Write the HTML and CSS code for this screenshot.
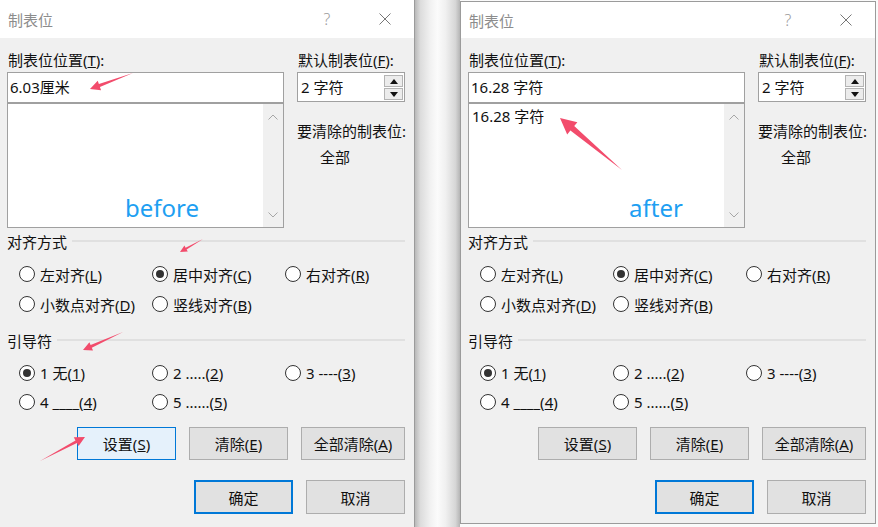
FILE: index.html
```html
<!DOCTYPE html>
<html lang="zh-CN">
<head>
    <meta charset="UTF-8">
    <title>制表位</title>
    <link rel="stylesheet" href="styles.css">
</head>
<body>
    <div class="page">
        <!-- 设置之前 -->
        <section class="dialog dialog-before">
            <div class="titlebar">
                <span class="title">制表位</span>
                <span class="tb-btn help">?</span>
                <span class="tb-btn">
                    <svg width="12" height="12" viewBox="0 0 12 12"><path d="M0.5 0.5 L11.5 11.5 M11.5 0.5 L0.5 11.5" stroke="#777" stroke-width="1" fill="none"/></svg>
                </span>
            </div>
            <div class="dlg-body">
                <div class="top">
                    <div class="col-pos">
                        <div class="field-label">制表位位置(<u>T</u>):</div>
                        <div class="textbox">6.03厘米</div>
                        <div class="listbox">
                            <div class="items"></div>
                            <div class="scroll">
                                <svg width="10" height="6" viewBox="0 0 10 6"><path d="M0.5 5.5 L5 1 L9.5 5.5" stroke="#a6a6a6" fill="none"/></svg>
                                <svg width="10" height="6" viewBox="0 0 10 6"><path d="M0.5 0.5 L5 5 L9.5 0.5" stroke="#a6a6a6" fill="none"/></svg>
                            </div>
                            <span class="note note-before">before</span>
                        </div>
                    </div>
                    <div class="col-def">
                        <div class="field-label">默认制表位(<u>F</u>):</div>
                        <div class="spin">
                            <span class="spin-value">2 字符</span>
                            <div class="spin-btns">
                                <span><svg width="8" height="5" viewBox="0 0 8 5"><path d="M0 5 L4 0 L8 5 Z" fill="#111"/></svg></span>
                                <span><svg width="8" height="5" viewBox="0 0 8 5"><path d="M0 0 L8 0 L4 5 Z" fill="#111"/></svg></span>
                            </div>
                        </div>
                        <div class="clear-label">要清除的制表位:</div>
                        <div class="clear-value">全部</div>
                    </div>
                </div>

                <div class="group-head">对齐方式</div>
                <div class="radios">
                    <div class="radio"><span class="dot"></span><span>左对齐(<u>L</u>)</span></div>
                    <div class="radio"><span class="dot on"></span><span>居中对齐(<u>C</u>)</span></div>
                    <div class="radio"><span class="dot"></span><span>右对齐(<u>R</u>)</span></div>
                    <div class="radio"><span class="dot"></span><span>小数点对齐(<u>D</u>)</span></div>
                    <div class="radio"><span class="dot"></span><span>竖线对齐(<u>B</u>)</span></div>
                </div>

                <div class="group-head group-gap">引导符</div>
                <div class="radios leaders">
                    <div class="radio"><span class="dot on"></span><span>1 无(<u>1</u>)</span></div>
                    <div class="radio"><span class="dot"></span><span>2 .....(<u>2</u>)</span></div>
                    <div class="radio"><span class="dot"></span><span>3 ----(<u>3</u>)</span></div>
                    <div class="radio"><span class="dot"></span><span>4 ____(<u>4</u>)</span></div>
                    <div class="radio"><span class="dot"></span><span>5 ......(<u>5</u>)</span></div>
                </div>

                <div class="btn-row">
                    <div class="btn hot">设置(<u>S</u>)</div>
                    <div class="btn">清除(<u>E</u>)</div>
                    <div class="btn wide">全部清除(<u>A</u>)</div>
                </div>
                <div class="btn-row ok-row">
                    <div class="btn default">确定</div>
                    <div class="btn">取消</div>
                </div>
            </div>
        </section>

        <div class="fold"></div>

        <!-- 设置之后 -->
        <section class="dialog dialog-after">
            <div class="titlebar">
                <span class="title">制表位</span>
                <span class="tb-btn help">?</span>
                <span class="tb-btn">
                    <svg width="12" height="12" viewBox="0 0 12 12"><path d="M0.5 0.5 L11.5 11.5 M11.5 0.5 L0.5 11.5" stroke="#777" stroke-width="1" fill="none"/></svg>
                </span>
            </div>
            <div class="dlg-body">
                <div class="top">
                    <div class="col-pos">
                        <div class="field-label">制表位位置(<u>T</u>):</div>
                        <div class="textbox">16.28 字符</div>
                        <div class="listbox">
                            <div class="items"><div class="item">16.28 字符</div></div>
                            <div class="scroll">
                                <svg width="10" height="6" viewBox="0 0 10 6"><path d="M0.5 5.5 L5 1 L9.5 5.5" stroke="#a6a6a6" fill="none"/></svg>
                                <svg width="10" height="6" viewBox="0 0 10 6"><path d="M0.5 0.5 L5 5 L9.5 0.5" stroke="#a6a6a6" fill="none"/></svg>
                            </div>
                            <span class="note note-after">after</span>
                        </div>
                    </div>
                    <div class="col-def">
                        <div class="field-label">默认制表位(<u>F</u>):</div>
                        <div class="spin">
                            <span class="spin-value">2 字符</span>
                            <div class="spin-btns">
                                <span><svg width="8" height="5" viewBox="0 0 8 5"><path d="M0 5 L4 0 L8 5 Z" fill="#111"/></svg></span>
                                <span><svg width="8" height="5" viewBox="0 0 8 5"><path d="M0 0 L8 0 L4 5 Z" fill="#111"/></svg></span>
                            </div>
                        </div>
                        <div class="clear-label">要清除的制表位:</div>
                        <div class="clear-value">全部</div>
                    </div>
                </div>

                <div class="group-head">对齐方式</div>
                <div class="radios">
                    <div class="radio"><span class="dot"></span><span>左对齐(<u>L</u>)</span></div>
                    <div class="radio"><span class="dot on"></span><span>居中对齐(<u>C</u>)</span></div>
                    <div class="radio"><span class="dot"></span><span>右对齐(<u>R</u>)</span></div>
                    <div class="radio"><span class="dot"></span><span>小数点对齐(<u>D</u>)</span></div>
                    <div class="radio"><span class="dot"></span><span>竖线对齐(<u>B</u>)</span></div>
                </div>

                <div class="group-head group-gap">引导符</div>
                <div class="radios leaders">
                    <div class="radio"><span class="dot on"></span><span>1 无(<u>1</u>)</span></div>
                    <div class="radio"><span class="dot"></span><span>2 .....(<u>2</u>)</span></div>
                    <div class="radio"><span class="dot"></span><span>3 ----(<u>3</u>)</span></div>
                    <div class="radio"><span class="dot"></span><span>4 ____(<u>4</u>)</span></div>
                    <div class="radio"><span class="dot"></span><span>5 ......(<u>5</u>)</span></div>
                </div>

                <div class="btn-row">
                    <div class="btn">设置(<u>S</u>)</div>
                    <div class="btn">清除(<u>E</u>)</div>
                    <div class="btn wide">全部清除(<u>A</u>)</div>
                </div>
                <div class="btn-row ok-row">
                    <div class="btn default">确定</div>
                    <div class="btn">取消</div>
                </div>
            </div>
        </section>

        <!-- 红色标注箭头 -->
        <svg class="arrows" width="878" height="527" viewBox="0 0 878 527">
            <polygon points="133,73 98.9,84.1 97.7,80.8 90,89 101.1,90.2 99.9,86.9"/>
            <polygon points="203,239 185.6,247.7 184.4,245.5 180,252 187.8,251.6 186.6,249.5"/>
            <polygon points="123,332 90.6,344.9 89.4,342.2 83,350 93,350.4 91.8,347.7"/>
            <polygon points="40,461 76.9,443 78.6,446.1 85,437 73.8,437.3 75.5,440.4"/>
            <polygon points="622,170 574.2,126 577.4,122.2 560,118 567.2,134.4 570.4,130.6"/>
        </svg>
    </div>
</body>
</html>
```

FILE: styles.css
```css
* {
    box-sizing: border-box;
}

body {
    margin: 0;
    background-color: #fafafa;
    font-family: "Noto Sans", "Noto Sans CJK SC", sans-serif;
    font-size: 15px;
    color: #111;
    overflow: hidden;
}

.page {
    position: relative;
    display: flex;
    align-items: flex-start;
    width: 878px;
    height: 527px;
    overflow: hidden;
}

/* 对话框 */
.dialog {
    width: 416px;
    flex-shrink: 0;
    background-color: #f0f0f0;
    border: 1px solid #9b9b9b;
}

.dialog-before {
    margin-left: -1px;
    border-top: 0;
    border-bottom: 0;
    padding-bottom: 4px;
}

.dialog-after {
    margin-top: 1px;
}

.titlebar {
    display: flex;
    align-items: center;
    height: 38px;
    padding: 0 6px 0 8px;
    background-color: #ffffff;
}

.dialog-after .titlebar {
    height: 36px;
}

.title {
    flex: 1;
    color: #8c8c8c;
}

.tb-btn {
    width: 46px;
    display: flex;
    justify-content: center;
    align-items: center;
}

.help {
    margin-right: 12px;
    color: #9a9a9a;
    font-size: 16px;
    font-weight: 300;
}

.dlg-body {
    padding: 12px 9px 9px 7px;
}

.top {
    display: flex;
    gap: 13px;
}

.col-pos {
    width: 277px;
}

.col-def {
    width: 108px;
}

.field-label {
    line-height: 20px;
    padding-left: 1px;
    margin-bottom: 2px;
    white-space: nowrap;
}

.textbox {
    height: 31px;
    line-height: 29px;
    padding-left: 2px;
    background-color: #ffffff;
    border: 1px solid #a0a0a0;
}

/* 列表框 */
.listbox {
    position: relative;
    display: flex;
    height: 125px;
    background-color: #ffffff;
    border: 1px solid #a0a0a0;
}

.items {
    flex: 1;
    padding: 1px 3px;
}

.item {
    line-height: 22px;
}

.scroll {
    width: 20px;
    display: flex;
    flex-direction: column;
    justify-content: space-between;
    align-items: center;
    padding: 10px 0 9px;
    background-color: #f0f0f0;
}

.note {
    position: absolute;
    top: 90px;
    font-size: 24px;
    line-height: 28px;
    color: #1e9ff2;
}

.note-before {
    left: 117px;
}

.note-after {
    left: 160px;
}

/* 默认制表位 */
.spin {
    display: flex;
    height: 30px;
    margin-top: 1px;
    background-color: #ffffff;
    border: 1px solid #a0a0a0;
}

.spin-value {
    flex: 1;
    padding-left: 3px;
    line-height: 28px;
    white-space: nowrap;
}

.spin-btns {
    width: 20px;
    display: flex;
    flex-direction: column;
    gap: 1px;
    padding: 2px 1px 1px 0;
}

.spin-btns span {
    flex: 1;
    display: flex;
    justify-content: center;
    align-items: center;
    background-color: #ececec;
    border: 1px solid #b4b4b4;
}

.clear-label {
    margin-top: 19px;
    line-height: 20px;
    white-space: nowrap;
}

.clear-value {
    margin-top: 6px;
    padding-left: 23px;
    line-height: 20px;
}

/* 分组 */
.group-head {
    display: flex;
    align-items: center;
    height: 20px;
    margin-top: 3px;

    &::after {
        content: "";
        flex: 1;
        height: 2px;
        margin-left: 5px;
        background-color: #e0e0e0;
    }
}

.group-gap {
    margin-top: 11px;
}

.radios {
    display: grid;
    grid-template-columns: 133px 133px 120px;
    grid-auto-rows: 30px;
    margin-top: 8px;
    padding-left: 12px;
}

.radios.leaders {
    grid-auto-rows: 29px;
}

.radio {
    display: flex;
    align-items: center;
    gap: 5px;
    white-space: nowrap;
}

.dot {
    width: 16px;
    height: 16px;
    flex-shrink: 0;
    display: flex;
    justify-content: center;
    align-items: center;
    border: 1px solid #333;
    border-radius: 50%;
    background-color: #ffffff;
}

.dot.on::after {
    content: "";
    width: 8px;
    height: 8px;
    border-radius: 50%;
    background-color: #333;
}

/* 按钮 */
.btn-row {
    display: flex;
    justify-content: flex-end;
    gap: 13px;
    margin-top: 11px;
}

.ok-row {
    margin-top: 20px;
}

.btn {
    width: 99px;
    height: 33px;
    display: flex;
    justify-content: center;
    align-items: center;
    background-color: #e1e1e1;
    border: 1px solid #adadad;
}

.btn.wide {
    width: 104px;
}

.ok-row .btn {
    height: 34px;
}

.btn.hot {
    background-color: #e5f1fb;
    border-color: #0078d7;
}

.btn.default {
    border: 2px solid #0078d7;
}

/* 两个对话框之间的阴影 */
.fold {
    width: 45px;
    flex-shrink: 0;
    align-self: stretch;
    background: linear-gradient(to right, #b9b9b9 0%, #dcdcdc 12%, #f2f2f2 35%, #fbfbfb 50%, #f0f0f0 68%, #d6d6d6 90%, #b5b5b5 100%);
}

.arrows {
    position: absolute;
    top: 0;
    left: 0;
    pointer-events: none;

    polygon {
        fill: #f24c6c;
    }
}
```
